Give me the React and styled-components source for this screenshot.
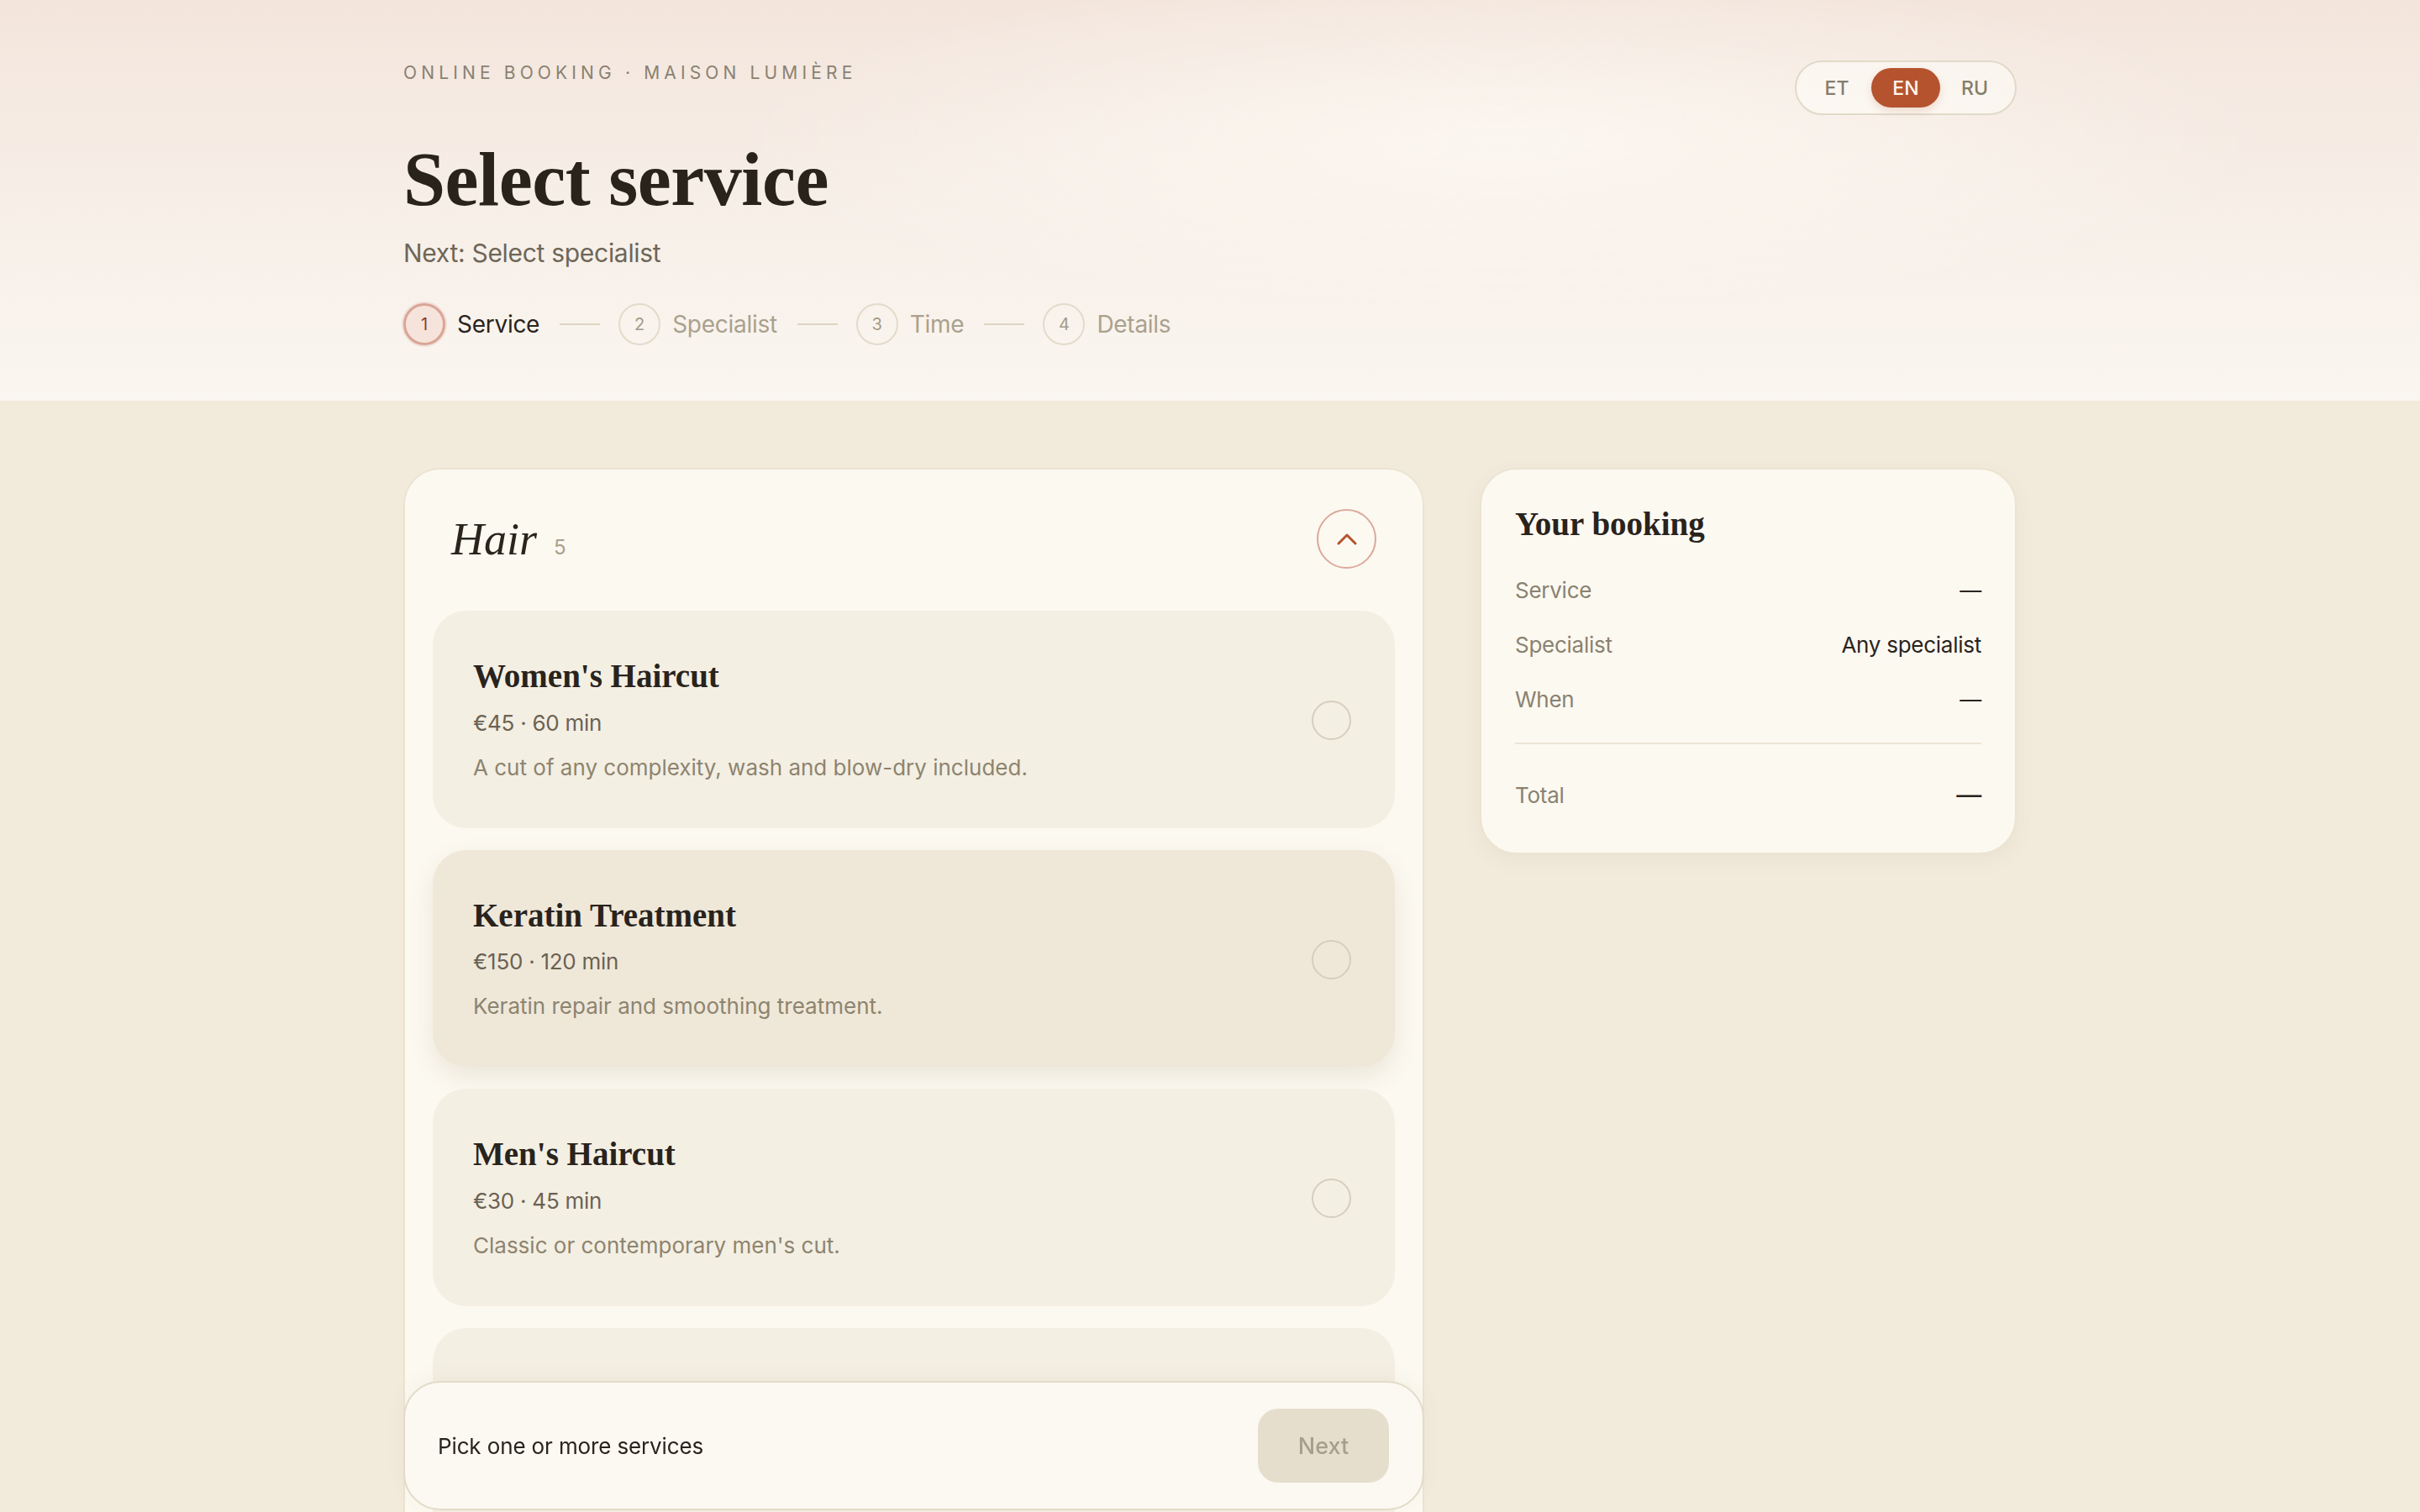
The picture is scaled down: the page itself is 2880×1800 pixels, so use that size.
import styled, { createGlobalStyle } from "styled-components"
import { ChevronUp } from "lucide-react"

const GlobalStyle = createGlobalStyle`
  * { box-sizing: border-box; }
  html, body { margin: 0; padding: 0; overflow: hidden; }
  body {
    font-family: "Inter", "Liberation Sans", sans-serif;
    color: #2a241d;
    background: #f2eadb;
  }
`

const services = [
  { name: "Women's Haircut", price: "€45", duration: "60 min", text: "A cut of any complexity, wash and blow-dry included." },
  { name: "Keratin Treatment", price: "€150", duration: "120 min", text: "Keratin repair and smoothing treatment.", hover: true },
  { name: "Men's Haircut", price: "€30", duration: "45 min", text: "Classic or contemporary men's cut." },
  { name: "Balayage Coloring", price: "€120", duration: "150 min", text: "Hand-painted highlights with toner and gloss." },
  { name: "Blow-dry & Styling", price: "€35", duration: "40 min", text: "Wash, blow-dry and finishing styling." },
]

const steps = ["Service", "Specialist", "Time", "Details"]

export default function App() {
  return (
    <Page>
      <GlobalStyle />
      <HeaderBand>
        <HeaderInner>
          <HeaderText>
            <Eyebrow>Online booking · Maison Lumière</Eyebrow>
            <Title>Select service</Title>
            <Subtitle>Next: Select specialist</Subtitle>
            <Steps>
              {steps.map((s, i) => (
                <StepGroup key={s}>
                  {i > 0 && <StepLine />}
                  <Step>
                    <StepNum $active={i === 0}>{i + 1}</StepNum>
                    <StepLabel $active={i === 0}>{s}</StepLabel>
                  </Step>
                </StepGroup>
              ))}
            </Steps>
          </HeaderText>
          <LangSwitch>
            <LangButton>ET</LangButton>
            <LangButton $active>EN</LangButton>
            <LangButton>RU</LangButton>
          </LangSwitch>
        </HeaderInner>
      </HeaderBand>

      <Main>
        <LeftColumn>
          <Card>
            <CardHeader>
              <CategoryTitle>
                <h2>Hair</h2>
                <span>5</span>
              </CategoryTitle>
              <CollapseButton>
                <ChevronUp size={40} strokeWidth={1.8} />
              </CollapseButton>
            </CardHeader>
            <ServiceList>
              {services.map(s => (
                <ServiceItem key={s.name} $hover={s.hover}>
                  <div>
                    <ServiceName>{s.name}</ServiceName>
                    <ServiceMeta>{s.price} · {s.duration}</ServiceMeta>
                    <ServiceText>{s.text}</ServiceText>
                  </div>
                  <Radio />
                </ServiceItem>
              ))}
            </ServiceList>
          </Card>
          <FooterBar>
            <FooterText>Pick one or more services</FooterText>
            <NextButton disabled>Next</NextButton>
          </FooterBar>
        </LeftColumn>

        <Summary>
          <SummaryTitle>Your booking</SummaryTitle>
          <SummaryRow>
            <span>Service</span>
            <strong>—</strong>
          </SummaryRow>
          <SummaryRow>
            <span>Specialist</span>
            <strong>Any specialist</strong>
          </SummaryRow>
          <SummaryRow>
            <span>When</span>
            <strong>—</strong>
          </SummaryRow>
          <Divider />
          <SummaryRow $total>
            <span>Total</span>
            <strong>—</strong>
          </SummaryRow>
        </Summary>
      </Main>
    </Page>
  )
}

const Page = styled.div`
  height: 100vh;
  overflow-y: auto;
  scrollbar-width: none;
  background: #f2eadb;
`
const HeaderBand = styled.header`
  background:
    radial-gradient(ellipse 45% 60% at 62% 35%, rgba(253, 250, 244, 0.75), rgba(253, 250, 244, 0) 70%),
    linear-gradient(180deg, #f3e5dc 0%, #f7efe8 55%, #faf6f0 100%);
`
const HeaderInner = styled.div`
  max-width: 1920px;
  margin: 0 auto;
  padding: 72px 0 66px;
  display: flex;
  justify-content: space-between;
  align-items: flex-start;
`
const HeaderText = styled.div`
  display: flex;
  flex-direction: column;
`
const Eyebrow = styled.div`
  font-size: 21px;
  line-height: 1.45;
  letter-spacing: 0.245em;
  text-transform: uppercase;
  color: #8a8170;
`
const Title = styled.h1`
  margin: 63px 0 0;
  font-family: "Liberation Serif", serif;
  font-weight: 700;
  font-size: 90px;
  line-height: 1.08;
  letter-spacing: -0.005em;
  color: #29231c;
`
const Subtitle = styled.p`
  margin: 18px 0 0;
  font-size: 30px;
  line-height: 1.35;
  letter-spacing: -0.01em;
  color: #6e6657;
`
const Steps = styled.div`
  margin-top: 40px;
  display: flex;
  align-items: center;
`
const StepGroup = styled.div`
  display: flex;
  align-items: center;
`
const StepLine = styled.div`
  width: 48px;
  height: 2px;
  background: #ddd5c3;
  margin: 0 22px 0 24px;
`
const Step = styled.div`
  display: flex;
  align-items: center;
  gap: 14px;
`
const StepNum = styled.div`
  width: 50px;
  height: 50px;
  border-radius: 50%;
  display: flex;
  align-items: center;
  justify-content: center;
  font-size: 20px;
  border: ${p => (p.$active ? "3px solid #d9a596" : "2px solid #e2dbcb")};
  background: ${p => (p.$active ? "#f6e4dc" : "transparent")};
  color: ${p => (p.$active ? "#8c3a28" : "#a39a88")};
  box-shadow: ${p => (p.$active ? "0 0 0 2px rgba(217, 165, 150, 0.25)" : "none")};
`
const StepLabel = styled.span`
  font-size: 28px;
  letter-spacing: -0.01em;
  color: ${p => (p.$active ? "#2a241d" : "#aaa18e")};
`
const LangSwitch = styled.div`
  display: flex;
  padding: 7px;
  border: 2px solid #e1dac9;
  border-radius: 40px;
  background: rgba(253, 251, 246, 0.6);
`
const LangButton = styled.button`
  width: 82px;
  height: 47px;
  border: none;
  border-radius: 24px;
  font-family: "Inter", sans-serif;
  font-size: 23px;
  font-weight: 500;
  background: ${p => (p.$active ? "#b5532f" : "transparent")};
  color: ${p => (p.$active ? "#fdf6ef" : "#857d6d")};
  box-shadow: ${p => (p.$active ? "0 4px 10px rgba(181, 83, 47, 0.18)" : "none")};
`
const Main = styled.main`
  max-width: 1920px;
  margin: 0 auto;
  padding-top: 80px;
  display: grid;
  grid-template-columns: 1fr 639px;
  gap: 66px;
  align-items: start;
`
const LeftColumn = styled.div`
  display: flex;
  flex-direction: column;
`
const Card = styled.section`
  background: #fcf9f1;
  border: 2px solid #ebe4d3;
  border-radius: 44px;
  padding: 47px 33px 40px;
`
const CardHeader = styled.div`
  display: flex;
  justify-content: space-between;
  align-items: center;
  padding: 0 22px;
  margin-bottom: 50px;
`
const CategoryTitle = styled.div`
  display: flex;
  align-items: baseline;
  gap: 20px;
  h2 {
    margin: 0;
    font-family: "Liberation Serif", serif;
    font-style: italic;
    font-weight: 400;
    font-size: 54px;
    color: #2a241d;
  }
  span {
    font-size: 24px;
    color: #a9a08d;
  }
`
const CollapseButton = styled.button`
  width: 71px;
  height: 71px;
  border-radius: 50%;
  border: 2px solid #dba99b;
  background: transparent;
  color: #b4532f;
  display: flex;
  align-items: center;
  justify-content: center;
  padding: 0;
`
const ServiceList = styled.div`
  display: flex;
  flex-direction: column;
  gap: 26px;
`
const ServiceItem = styled.div`
  display: flex;
  justify-content: space-between;
  align-items: center;
  padding: 55px 52px 53px 48px;
  border-radius: 40px;
  background: ${p => (p.$hover ? "#efe8d9" : "#f4efe3")};
  box-shadow: ${p => (p.$hover ? "0 12px 30px rgba(120, 100, 60, 0.12)" : "none")};
`
const ServiceName = styled.h3`
  margin: 0 0 13px;
  font-family: "Liberation Serif", serif;
  font-weight: 700;
  font-size: 39px;
  line-height: 1.17;
  color: #29231c;
`
const ServiceMeta = styled.div`
  margin-bottom: 14px;
  font-size: 26px;
  line-height: 1.5;
  letter-spacing: -0.01em;
  color: #6b6254;
`
const ServiceText = styled.p`
  margin: 0;
  font-size: 26px;
  line-height: 1.5;
  color: #8d846f;
`
const Radio = styled.div`
  width: 47px;
  height: 47px;
  flex-shrink: 0;
  border-radius: 50%;
  border: 2px solid #d6cebd;
`
const FooterBar = styled.div`
  position: sticky;
  bottom: 2px;
  z-index: 2;
  margin-top: -200px;
  display: flex;
  justify-content: space-between;
  align-items: center;
  padding: 31px 40px 31px 39px;
  border: 2px solid #e3dbc8;
  border-radius: 44px;
  background: #fcf9f2;
  box-shadow: 0 -6px 24px rgba(120, 100, 60, 0.05);
`
const FooterText = styled.span`
  font-size: 26px;
  letter-spacing: -0.005em;
  color: #2a241d;
`
const NextButton = styled.button`
  width: 156px;
  height: 88px;
  border: none;
  border-radius: 24px;
  background: #e6decd;
  color: #a89f8a;
  font-family: "Inter", sans-serif;
  font-size: 27px;
  font-weight: 500;
`
const Summary = styled.aside`
  background: #fcf9f1;
  border: 2px solid #ebe4d3;
  border-radius: 44px;
  padding: 42px 40px 46px;
  box-shadow: 0 8px 24px rgba(120, 100, 60, 0.06);
`
const SummaryTitle = styled.h2`
  margin: 0 0 36px;
  font-family: "Liberation Serif", serif;
  font-weight: 700;
  font-size: 39px;
  line-height: 1.17;
  color: #29231c;
`
const SummaryRow = styled.div`
  display: flex;
  justify-content: space-between;
  align-items: center;
  font-size: 26px;
  line-height: 1.5;
  letter-spacing: -0.01em;
  & + & { margin-top: 26px; }
  span { color: #8a8270; }
  strong {
    font-weight: 400;
    color: #2a241d;
    font-size: ${p => (p.$total ? "30px" : "26px")};
  }
`
const Divider = styled.div`
  height: 2px;
  background: #ece5d5;
  margin: 32px 0 38px;
`
